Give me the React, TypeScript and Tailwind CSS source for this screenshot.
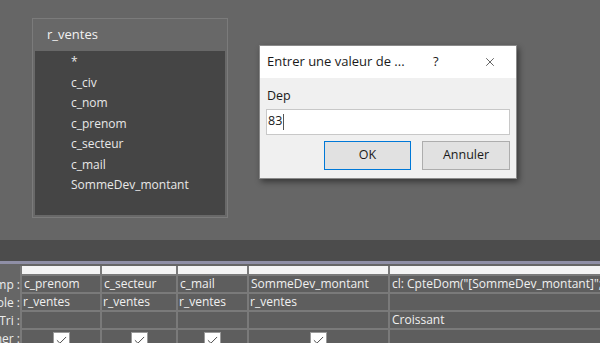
import { Check, X } from 'lucide-react';

const fields = ['*', 'c_civ', 'c_nom', 'c_prenom', 'c_secteur', 'c_mail', 'SommeDev_montant'];

const columns = [
  { w: 'w-[80px]', field: 'c_prenom', table: 'r_ventes', sort: '', show: true },
  { w: 'w-[76px]', field: 'c_secteur', table: 'r_ventes', sort: '', show: true },
  { w: 'w-[71px]', field: 'c_mail', table: 'r_ventes', sort: '', show: true },
  { w: 'w-[141px]', field: 'SommeDev_montant', table: 'r_ventes', sort: '', show: true },
  { w: 'w-[220px]', field: 'cl: CpteDom("[SommeDev_montant]";"', table: '', sort: 'Croissant', show: false },
];

const labels = ['mp :', 'ole :', 'Tri :', 'ner :'];

function TableBox() {
  return (
    <div className="ml-[32px] flex h-[200px] w-[196px] flex-col border border-[#7b7b7b] bg-[#686868] px-[2px] pb-[2px]">
      <div className="flex h-[32px] items-center pl-[12px] text-[13px] text-[#f2f2f2]">r_ventes</div>
      <div className="flex-1 bg-[#454545] pl-[36px] pt-[1px]">
        {fields.map((f) => (
          <div key={f} className="flex h-[20.5px] items-center text-[12px] text-[#e8e8e8]">
            {f}
          </div>
        ))}
      </div>
    </div>
  );
}

function Dialog() {
  return (
    <div className="absolute left-[259px] top-[45px] w-[258px] border border-[#8a8a8a] bg-[#f0f0f0] shadow-[2px_3px_6px_rgba(0,0,0,0.45)]">
      <div className="flex h-[32px] items-center bg-white pl-[7px] text-[13px] text-[#1a1a1a]">
        <span className="w-[166px]">Entrer une valeur de ...</span>
        <span className="w-[50px] text-[13px]">?</span>
        <X className="h-[14px] w-[14px] text-[#222]" strokeWidth={1.2} />
      </div>
      <div className="px-[6px] pb-[8px] pt-[9px]">
        <div className="pl-[1px] text-[12.5px] text-[#1a1a1a]">Dep</div>
        <div className="mt-[3px] flex h-[26px] w-[244px] items-center border border-[#c8c8c8] bg-white pl-[1px] text-[12.5px] text-[#1a1a1a]">
          83<span className="ml-px h-[16px] w-px bg-[#555]" />
        </div>
        <div className="mt-[6px] flex justify-end gap-[11px] pr-[0px]">
          <button className="h-[29px] w-[87px] border border-[#0078d7] bg-[#e1e1e1] text-[12.5px] text-[#1a1a1a]">OK</button>
          <button className="h-[29px] w-[88px] border border-[#adadad] bg-[#e1e1e1] text-[12.5px] text-[#1a1a1a]">Annuler</button>
        </div>
      </div>
    </div>
  );
}

function Grid() {
  return (
    <div className="flex">
      <div className="w-[20px] shrink-0 pt-[10px] text-[12px] text-[#ececec]">
        {labels.map((l) => (
          <div key={l} className="flex h-[18px] items-center justify-end whitespace-nowrap">
            {l}
          </div>
        ))}
      </div>
      <div className="flex">
        {columns.map((c, i) => (
          <div key={i} className={`${c.w} shrink-0 border-l-2 border-[#7a7a7a]`}>
            <div className="h-[10px] border-b-2 border-[#7a7a7a] bg-[#f4f4f4]" />
            <div className="flex h-[18px] items-center overflow-hidden whitespace-nowrap border-b-2 border-[#7a7a7a] bg-[#5e5e5e] pl-[2px] text-[12px] text-[#f0f0f0]">
              {c.field}
            </div>
            <div className="flex h-[18px] items-center overflow-hidden whitespace-nowrap border-b-2 border-[#7a7a7a] bg-[#5e5e5e] pl-[1px] text-[12px] text-[#f0f0f0]">
              {c.table}
            </div>
            <div className="flex h-[18px] items-center whitespace-nowrap border-b-2 border-[#7a7a7a] bg-[#5e5e5e] pl-[2px] text-[12px] text-[#f0f0f0]">
              {c.sort}
            </div>
            <div className="flex h-[20px] justify-center bg-[#5e5e5e] pt-[2px]">
              {c.show && (
                <div className="flex h-[17px] w-[17px] items-center justify-center border border-[#9a9a9a] bg-white">
                  <Check className="h-[13px] w-[13px] text-[#222]" strokeWidth={1.5} />
                </div>
              )}
            </div>
          </div>
        ))}
      </div>
    </div>
  );
}

export default function App() {
  return (
    <div className="relative h-[343px] w-[600px] overflow-hidden bg-[#666666] font-['Open_Sans','Noto_Sans',sans-serif]">
      <div className="h-[240px] pt-[18px]">
        <TableBox />
      </div>
      <div className="h-[21px] bg-[#4c4c4c]" />
      <div className="h-[3px] bg-[#8f8fa6]" />
      <div className="h-[2px]" />
      <Grid />
      <Dialog />
    </div>
  );
}
